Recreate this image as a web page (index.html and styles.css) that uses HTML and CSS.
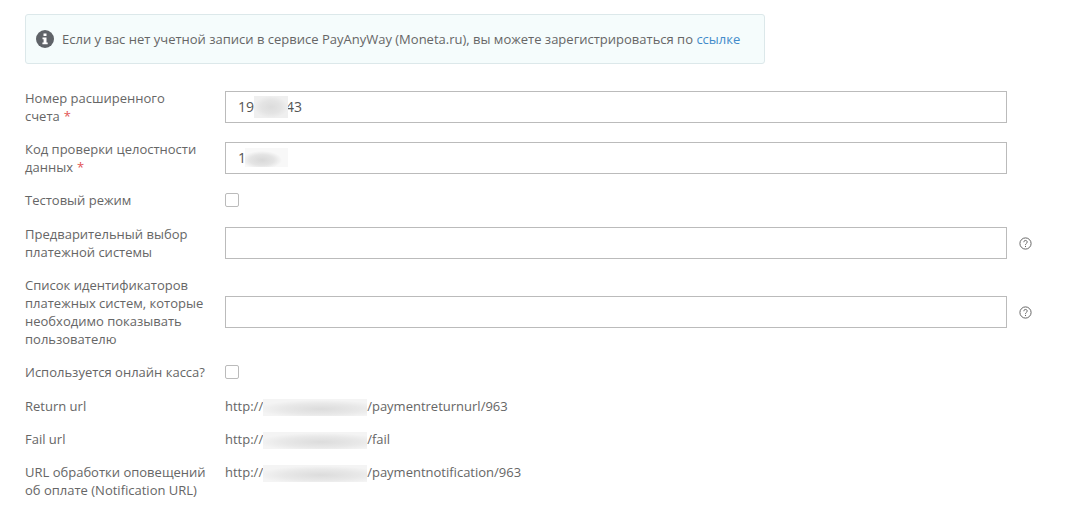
FILE: index.html
```html
<!DOCTYPE html>
<html lang="ru">
<head>
    <meta charset="UTF-8">
    <meta name="viewport" content="width=device-width, initial-scale=1.0">
    <title>PayAnyWay</title>
    <link rel="stylesheet" href="styles.css">
</head>
<body>
    <div class="notice">
        <svg class="notice-icon" viewBox="0 0 18 18" aria-hidden="true">
            <circle cx="9" cy="9" r="9" fill="#5f6368"/>
            <path d="M7.5 3.5h3v2.5h-3zM6.5 7.5h4v5h1.2v1.7H6.4v-1.7h1.2V9.2H6.5z" fill="#fff"/>
        </svg>
        <p>Если у вас нет учетной записи в сервисе PayAnyWay (Moneta.ru), вы можете зарегистрироваться по <a href="#">ссылке</a></p>
    </div>

    <form class="settings">
        <div class="row">
            <label class="name" for="account">Номер расширенного счета<span class="required">*</span></label>
            <div class="field">
                <input type="text" id="account" value="19000043">
                <span class="mask mask-account"></span>
            </div>
        </div>

        <div class="row">
            <label class="name" for="code">Код проверки целостности данных<span class="required">*</span></label>
            <div class="field">
                <input type="text" id="code" value="1">
                <span class="mask mask-code"></span>
            </div>
        </div>

        <div class="row">
            <label class="name" for="test-mode">Тестовый режим</label>
            <input type="checkbox" id="test-mode">
        </div>

        <div class="row">
            <label class="name" for="system">Предварительный выбор платежной системы</label>
            <div class="field">
                <input type="text" id="system">
                <button type="button" class="help" aria-label="Подсказка">
                    <svg viewBox="0 0 13 13">
                        <circle cx="6.5" cy="6.5" r="5.6"/>
                        <path d="M4.8 5.2c0-2.4 3.5-2.2 3.4-.1 0 1.3-1.7 1.3-1.7 2.7M6.5 8.900v1.100"/>
                    </svg>
                </button>
            </div>
        </div>

        <div class="row">
            <label class="name" for="system-list">Список идентификаторов платежных систем, которые необходимо показывать пользователю</label>
            <div class="field">
                <input type="text" id="system-list">
                <button type="button" class="help" aria-label="Подсказка">
                    <svg viewBox="0 0 13 13">
                        <circle cx="6.5" cy="6.5" r="5.6"/>
                        <path d="M4.8 5.2c0-2.4 3.5-2.2 3.4-.1 0 1.3-1.7 1.3-1.7 2.7M6.5 8.900v1.100"/>
                    </svg>
                </button>
            </div>
        </div>

        <div class="row">
            <label class="name" for="kassa">Используется онлайн касса?</label>
            <input type="checkbox" id="kassa">
        </div>

        <div class="urls">
            <div class="row">
                <span class="name">Return url</span>
                <span class="url">http://<span class="mask mask-host"></span>/paymentreturnurl/963</span>
            </div>

            <div class="row">
                <span class="name">Fail url</span>
                <span class="url">http://<span class="mask mask-host"></span>/fail</span>
            </div>

            <div class="row">
                <span class="name">URL обработки оповещений об оплате (Notification URL)</span>
                <span class="url">http://<span class="mask mask-host"></span>/paymentnotification/963</span>
            </div>
        </div>
    </form>
</body>
</html>
```
FILE: styles.css
```css
* {
    margin: 0;
    padding: 0;
    box-sizing: border-box;
}
body {
    font-family: 'Open Sans', 'Noto Sans', sans-serif;
    font-size: 13px;
    line-height: 18px;
    background-color: #fff;
    color: #666;
    padding: 14px 25px 0;
}
.notice {
    display: flex;
    align-items: center;
    gap: 8px;
    max-width: 740px;
    min-height: 50px;
    padding: 0 10px;
    background-color: #f5fcfc;
    border: 1px solid #dce8ea;
    border-radius: 3px;
}
.notice-icon {
    width: 18px;
    height: 18px;
    flex: none;
}
.notice a {
    color: #428bca;
    text-decoration: none;
}
.settings {
    display: flex;
    flex-direction: column;
    gap: 16px;
    margin-top: 25px;
}
.row {
    display: flex;
    align-items: center;
}
.row:has(.field) {
    margin-bottom: -1px;
}
.name {
    flex: none;
    width: 182px;
    margin-right: 18px;
}
.required {
    margin-left: 4px;
    color: #e25454;
}
.field {
    display: flex;
    align-items: center;
    gap: 12px;
    position: relative;
    flex: 1;
    padding-right: 41px;
}
.field:has(.help) {
    padding-right: 16px;
}
input[type="text"] {
    flex: 1;
    min-width: 0;
    height: 32px;
    padding: 0 12px 2px;
    border: 1px solid #bbb;
    background-color: #fff;
    font-family: inherit;
    font-size: 14px;
    color: #555;
}
input[type="checkbox"] {
    appearance: none;
    width: 14px;
    height: 14px;
    border: 1px solid #bbb;
    border-radius: 2px;
    background-color: #fff;
}
input[type="checkbox"]:checked {
    background-color: #428bca;
}
.help {
    flex: none;
    width: 13px;
    height: 13px;
    border: none;
    background: none;
    cursor: pointer;
}
.help svg {
    display: block;
    width: 100%;
    height: 100%;
    fill: none;
    stroke: #666;
}
.urls {
    display: flex;
    flex-direction: column;
    gap: 15px;
}
.urls .row {
    align-items: flex-start;
}
.url {
    height: 18px;
    white-space: nowrap;
}

/* Hidden parts of the account data */
.mask {
    background: radial-gradient(closest-side, #dcdcdc, #e4e4e4 60%, #efefef);
}
.mask-account {
    position: absolute;
    top: 5px;
    left: 29px;
    width: 34px;
    height: 22px;
}
.mask-code {
    position: absolute;
    top: 6px;
    left: 20px;
    width: 43px;
    height: 19px;
    background: radial-gradient(ellipse 20px 9px at 17px 12px, #d8d8d8, #e4e4e4 60%, #f8f8f8);
}
.mask-host {
    display: inline-block;
    width: 104px;
    height: 17px;
    vertical-align: middle;
    background: radial-gradient(ellipse 64px 9px at 58px 10px, #dcdcdc, #e8e8e8 60%, #f4f4f4);
}
```
